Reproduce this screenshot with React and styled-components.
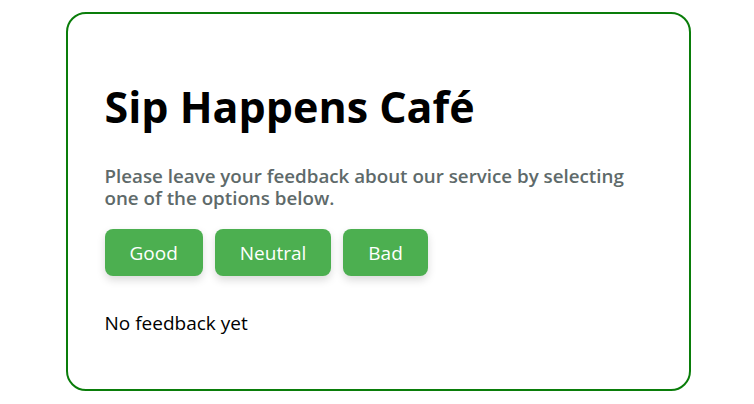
import React, { useState } from 'react';
import styled, { createGlobalStyle } from 'styled-components';

const GlobalStyle = createGlobalStyle`
    body {
        margin: 0;
        background: #ffffff;
        font-family: "Open Sans", "Noto Sans", "Liberation Sans", sans-serif;
    }
`;

const Page = styled.div`
    display: flex;
    justify-content: center;
    padding: 12px 0 0 2px;
`;

const Card = styled.div`
    box-sizing: border-box;
    width: 625px;
    height: 379px;
    border: 2px solid #0a7d0a;
    border-radius: 20px;
    padding: 66px 37px 0 37px;
`;

const Title = styled.h1`
    margin: 0;
    font-size: 43px;
    line-height: 54px;
    font-weight: 700;
    color: #000;
`;

const Intro = styled.p`
    margin: 31px 0 0 0;
    max-width: 530px;
    font-size: 18.75px;
    line-height: 22px;
    font-weight: 600;
    color: #5e6a6a;
`;

const ButtonRow = styled.div`
    display: flex;
    gap: 12px;
    margin-top: 20px;
`;

const FeedbackButton = styled.button`
    height: 47px;
    padding: 0 25px;
    border: none;
    border-radius: 8px;
    background: #4caf50;
    color: #ffffff;
    font-family: inherit;
    font-size: 19px;
    box-shadow: 0 4px 8px rgba(0, 0, 0, 0.15);
    cursor: pointer;
`;

const Status = styled.p`
    margin: 35px 0 0 0;
    font-size: 19px;
    line-height: 24px;
    color: #000;
`;

const options = ['Good', 'Neutral', 'Bad'];

export default function App() {
    const [feedback, setFeedback] = useState(null);
    return (
        <>
            <GlobalStyle />
            <Page>
                <Card>
                    <Title>Sip Happens Café</Title>
                    <Intro>Please leave your feedback about our service by selecting one of the options below.</Intro>
                    <ButtonRow>
                        {options.map(label => (
                            <FeedbackButton key={label} onClick={() => setFeedback(label)}>
                                {label}
                            </FeedbackButton>
                        ))}
                    </ButtonRow>
                    <Status>{feedback ? `You selected: ${feedback}` : 'No feedback yet'}</Status>
                </Card>
            </Page>
        </>
    );
}
